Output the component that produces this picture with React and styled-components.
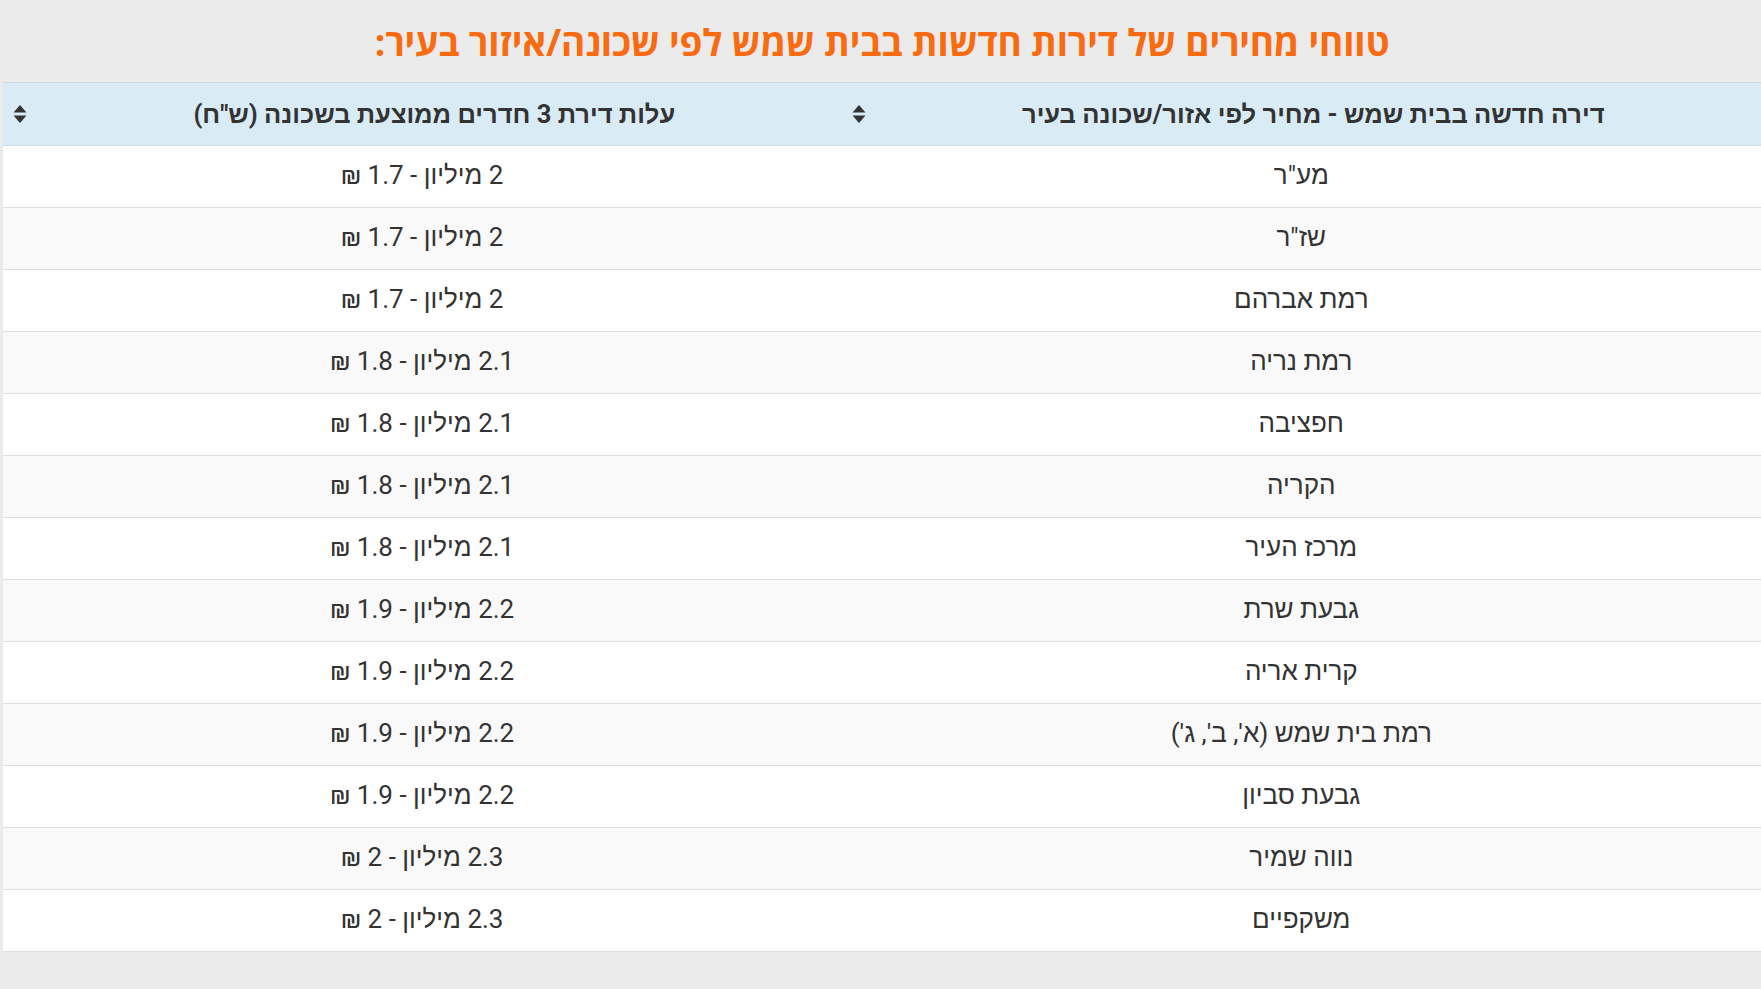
import React from "react";
import styled, { createGlobalStyle } from "styled-components";

const rows = [
  ["מע\"ר", "2 מיליון - 1.7 ₪"],
  ["שז\"ר", "2 מיליון - 1.7 ₪"],
  ["רמת אברהם", "2 מיליון - 1.7 ₪"],
  ["רמת נריה", "2.1 מיליון - 1.8 ₪"],
  ["חפציבה", "2.1 מיליון - 1.8 ₪"],
  ["הקריה", "2.1 מיליון - 1.8 ₪"],
  ["מרכז העיר", "2.1 מיליון - 1.8 ₪"],
  ["גבעת שרת", "2.2 מיליון - 1.9 ₪"],
  ["קרית אריה", "2.2 מיליון - 1.9 ₪"],
  ["רמת בית שמש (א', ב', ג')", "2.2 מיליון - 1.9 ₪"],
  ["גבעת סביון", "2.2 מיליון - 1.9 ₪"],
  ["נווה שמיר", "2.3 מיליון - 2 ₪"],
  ["משקפיים", "2.3 מיליון - 2 ₪"]
];

export default function App() {
  return (
    <>
      <GlobalStyle />
      <Page dir="rtl">
        <Title>טווחי מחירים של דירות חדשות בבית שמש לפי שכונה/איזור בעיר:</Title>
        <Table>
          <colgroup>
            <col style={{ width: "52.3%" }} />
            <col />
          </colgroup>
          <thead>
            <tr>
              <HeadCell>
                דירה חדשה בבית שמש - מחיר לפי אזור/שכונה בעיר
                <SortIcon />
              </HeadCell>
              <HeadCell>
                עלות דירת 3 חדרים ממוצעת בשכונה (ש"ח)
                <SortIcon />
              </HeadCell>
            </tr>
          </thead>
          <tbody>
            {rows.map(([area, price], i) => (
              <Row key={i} $striped={i % 2 === 1}>
                <Cell>{area}</Cell>
                <Cell>{price}</Cell>
              </Row>
            ))}
          </tbody>
        </Table>
      </Page>
    </>
  );
}

function SortIcon() {
  return (
    <SortWrap>
      <svg width="14" height="18" viewBox="0 0 14 18">
        <path d="M7 0 L13.5 7.5 H0.5 Z" fill="#333" />
        <path d="M7 18 L13.5 10.5 H0.5 Z" fill="#333" />
      </svg>
    </SortWrap>
  );
}

const GlobalStyle = createGlobalStyle`
  body {
    margin: 0;
    background: #ebebeb;
    font-family: Roboto, "Liberation Sans", Arial, sans-serif;
  }
`;

const Page = styled.div`
  padding: 0 0 40px 0;
  margin-left: 3px;
`;

const Title = styled.h2`
  margin: 0;
  height: 82px;
  display: flex;
  align-items: center;
  justify-content: center;
  font-family: "Open Sans", sans-serif;
  font-weight: 700;
  font-size: 37px;
  letter-spacing: -0.2px;
  color: #f96b10;
`;

const Table = styled.table`
  width: 100%;
  border-collapse: collapse;
  table-layout: fixed;
  background: #fff;
`;

const HeadCell = styled.th`
  position: relative;
  height: 62px;
  padding: 0 16px 0 40px;
  line-height: 30px;
  background: #d9ebf5;
  border-top: 1px solid #d0d8dc;
  border-bottom: 1px solid #d6dadc;
  font-family: Roboto, "Liberation Sans", Arial, sans-serif;
  font-weight: 700;
  font-size: 25.5px;
  color: #333;
  text-align: center;
`;

const SortWrap = styled.span`
  position: absolute;
  left: 10px;
  top: 50%;
  transform: translateY(-50%);
  display: flex;
`;

const Row = styled.tr`
  background: ${(p) => (p.$striped ? "#f9f9f9" : "#fff")};
`;

const Cell = styled.td`
  height: 58px;
  padding: 0 20px 3px;
  line-height: 30px;
  border-bottom: 1px solid #dedede;
  font-size: 26px;
  color: #333;
  text-align: center;
`;
